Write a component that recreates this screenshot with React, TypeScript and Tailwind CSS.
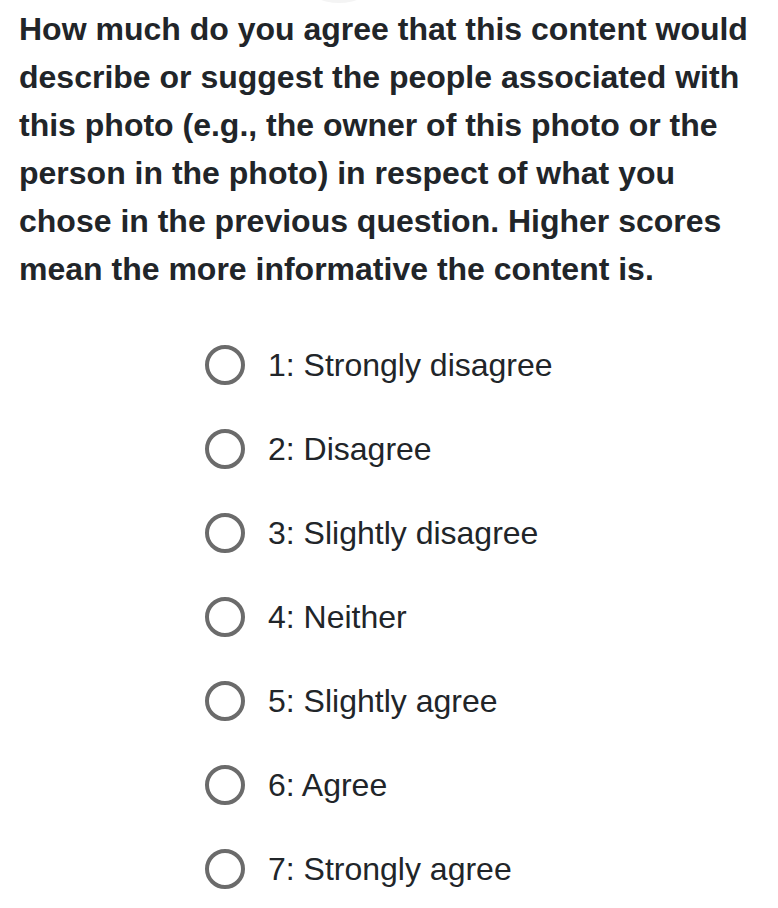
import React from "react";

const options = [
  "1: Strongly disagree",
  "2: Disagree",
  "3: Slightly disagree",
  "4: Neither",
  "5: Slightly agree",
  "6: Agree",
  "7: Strongly agree",
];

export default function App() {
  return (
    <div
      className="relative w-[778px] h-[908px] bg-white overflow-hidden px-[19px] pt-[5px]"
      style={{ fontFamily: '"Liberation Sans", Arial, Helvetica, sans-serif' }}
    >
      <div className="absolute left-[308px] top-[-30px] w-[62px] h-[33px] rounded-[50%] bg-[#f4f4f4]" />
      <h1 className="relative text-[32px] leading-[48px] font-bold text-[#212529]">
        How much do you agree that this content would describe or suggest the people associated with this photo (e.g., the owner of this photo or the person in the photo) in respect of what you chose in the previous question. Higher scores mean the more informative the content is.
      </h1>
      <div className="mt-[30px] pl-[186px] flex flex-col">
        {options.map((o) => (
          <label key={o} className="flex items-center h-[84px] gap-[23px]">
            <span className="block w-[40px] h-[40px] rounded-full border-[4px] border-[#6b6b6b] shrink-0" />
            <span className="text-[32px] leading-none text-[#212529]">{o}</span>
          </label>
        ))}
      </div>
    </div>
  );
}
